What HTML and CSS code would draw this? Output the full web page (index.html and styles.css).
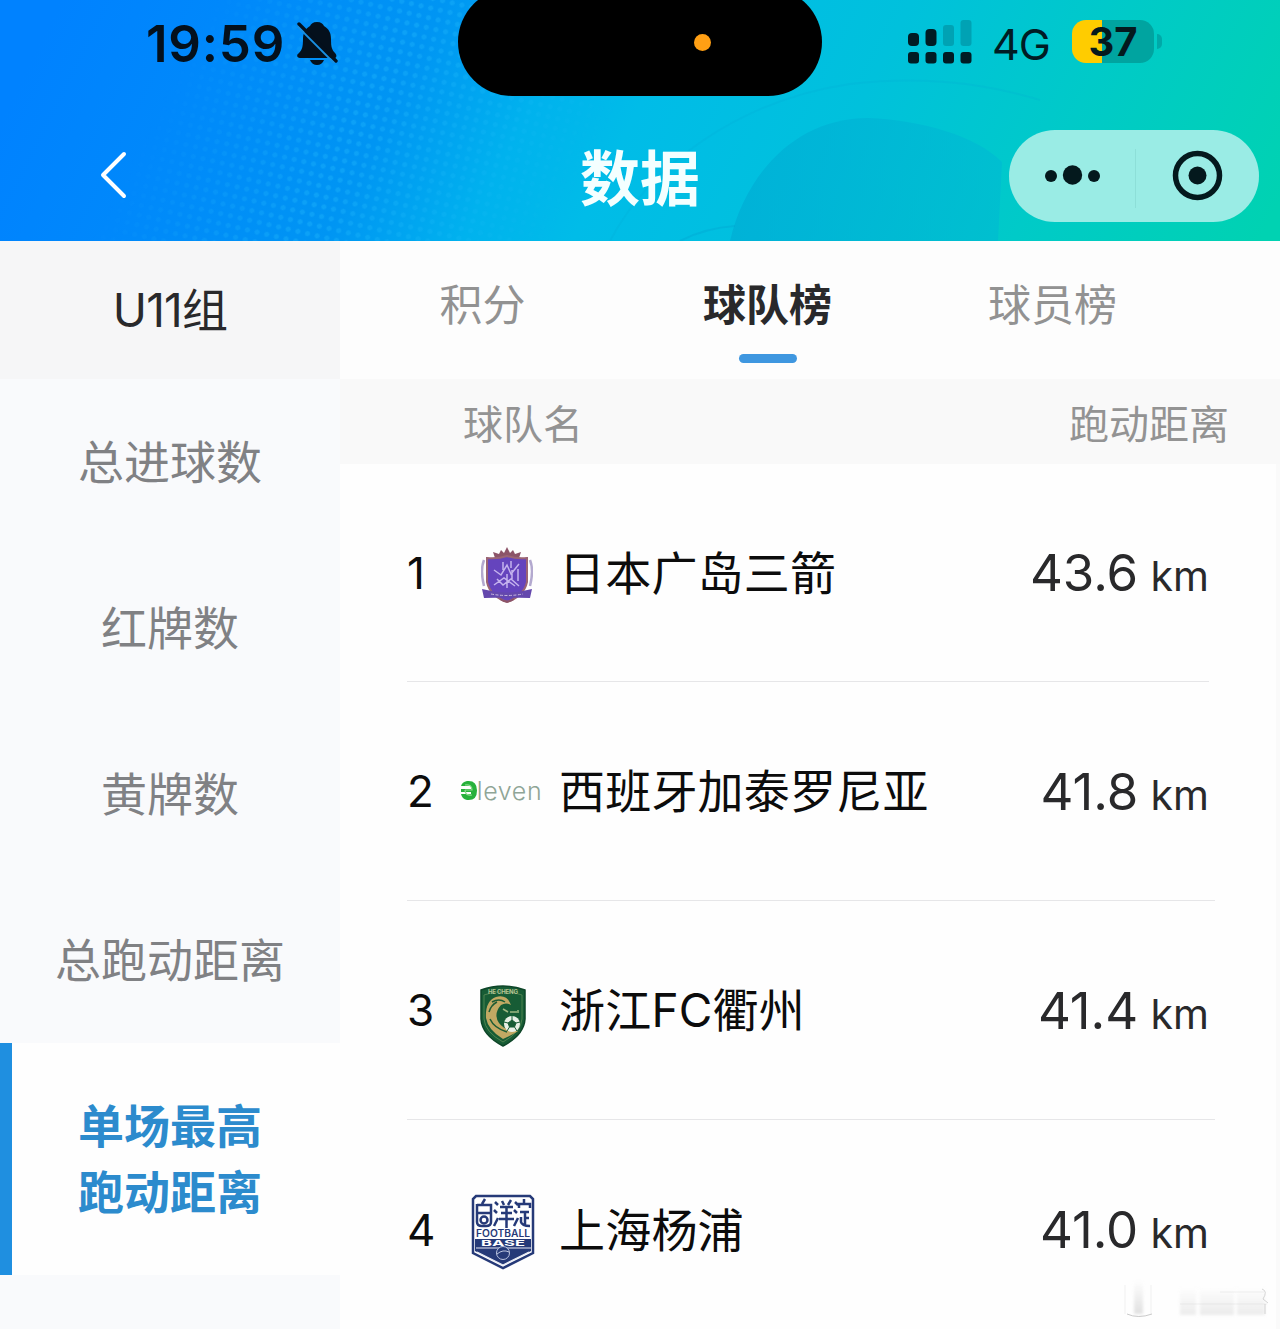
FILE: index.html
```
<!DOCTYPE html>
<html lang="zh-CN">
<head>
  <meta charset="UTF-8">
  <meta name="viewport" content="width=device-width, initial-scale=1">
  <title>数据</title>
  <link rel="stylesheet" href="styles.css">
</head>
<body>
  <div class="header">
    <svg class="header-bg" width="1280" height="241" viewBox="0 0 1280 241">
      <defs>
        <linearGradient id="sky" gradientUnits="userSpaceOnUse" x1="60" y1="0" x2="1160" y2="550">
          <stop offset="0" stop-color="#0082ff"/>
          <stop offset="0.12" stop-color="#0088fb"/>
          <stop offset="0.28" stop-color="#0095f3"/>
          <stop offset="0.38" stop-color="#00b2ee"/>
          <stop offset="0.46" stop-color="#00bce8"/>
          <stop offset="0.62" stop-color="#00c1dc"/>
          <stop offset="0.78" stop-color="#00cac8"/>
          <stop offset="0.96" stop-color="#00d2b2"/>
        </linearGradient>
        <pattern id="dots" width="14" height="14" patternUnits="userSpaceOnUse" patternTransform="rotate(-32)">
          <circle cx="4" cy="4" r="2.6" fill="#2cc6ff"/>
          <circle cx="11" cy="11" r="2.6" fill="#2cc6ff"/>
        </pattern>
        <linearGradient id="fade" gradientUnits="userSpaceOnUse" x1="190" y1="40" x2="560" y2="230">
          <stop offset="0" stop-color="#fff" stop-opacity="0"/>
          <stop offset="0.45" stop-color="#fff" stop-opacity="0.28"/>
          <stop offset="0.75" stop-color="#fff" stop-opacity="0.15"/>
          <stop offset="1" stop-color="#fff" stop-opacity="0"/>
        </linearGradient>
        <mask id="dotmask"><rect width="1280" height="241" fill="url(#fade)"/></mask>
        <linearGradient id="ball" x1="0" y1="0" x2="1" y2="0">
          <stop offset="0" stop-color="#00a9d2" stop-opacity="0.6"/>
          <stop offset="1" stop-color="#00b6d4" stop-opacity="0.5"/>
        </linearGradient>
      </defs>
      <rect width="1280" height="241" fill="url(#sky)"/>
      <rect width="1280" height="241" fill="url(#dots)" mask="url(#dotmask)"/>
      <path d="M730 241C745 175 795 118 868 118C920 120 975 135 1002 162L998 241Z" fill="url(#ball)"/>
      <path d="M610 241C650 165 740 100 850 84C920 76 980 82 1040 100" fill="none" stroke="#00a9d0" stroke-opacity="0.18" stroke-width="2"/>
      <path d="M680 241Q705 228 735 226" fill="none" stroke="#00a0cc" stroke-opacity="0.3" stroke-width="2"/>
    </svg>
    <div class="status">
      <div class="status-left">
        <span class="time">19:59</span>
        <svg class="bell" width="42" height="46" viewBox="0 0 42 46">
          <path d="M20 1c-4 0-6 2-7 4C8 8 6 13 6 18c0 8-1 11-4 14-3 2-2 5 1 5h34c3 0 3-3 1-5-3-3-4-6-4-14 0-6-2-10-7-13-1-2-3-4-7-4z" fill="#04101c"/>
          <path d="M13 39h14c-1 3-4 5-7 5s-6-2-7-5z" fill="#04101c"/>
          <path d="M2 3L39 40" stroke="#04101c" stroke-width="3.400" stroke-linecap="round"/>
          <path d="M0.500 5.500L37 42" stroke="#1a8fe0" stroke-width="1.800"/>
        </svg>
      </div>
      <div class="island"><span class="mic"></span></div>
      <div class="status-right">
        <svg width="64" height="44" viewBox="0 0 64 44">
          <g fill="#001c24">
            <rect x="0" y="13" width="11" height="13" rx="4"/>
            <rect x="17.500" y="9" width="11" height="17" rx="4"/>
            <rect x="0" y="32" width="11" height="11.500" rx="3"/>
            <rect x="17.500" y="32" width="11" height="11.500" rx="3"/>
            <rect x="35" y="32" width="11" height="11.500" rx="3"/>
            <rect x="52.500" y="32" width="11" height="11.500" rx="3"/>
          </g>
          <g fill="#00a2b4">
            <rect x="35" y="5" width="11" height="21" rx="3"/>
            <rect x="52.500" y="0" width="11" height="26" rx="3"/>
          </g>
        </svg>
        <span class="net">4G</span>
        <span class="battery">37</span>
        <span class="battery-cap"></span>
      </div>
    </div>
    <div class="nav">
      <svg class="back" width="30" height="50" viewBox="0 0 30 50">
        <path d="M25 4L4 25L25 46" fill="none" stroke="#fff" stroke-width="4" stroke-linecap="round" stroke-linejoin="round"/>
      </svg>
      <h1>数据</h1>
      <div class="capsule">
        <svg width="250" height="92" viewBox="0 0 250 92">
          <g fill="#04191d">
            <circle cx="42" cy="46" r="6"/>
            <circle cx="63.500" cy="45" r="9.700"/>
            <circle cx="85" cy="46" r="6"/>
            <circle cx="188.500" cy="45.500" r="9"/>
          </g>
          <circle cx="188.500" cy="45.500" r="22" fill="none" stroke="#04191d" stroke-width="5.500"/>
          <path d="M126.500 19V78" stroke="#8ddfd8"/>
        </svg>
      </div>
    </div>
  </div>

  <div class="main">
    <div class="side">
      <div class="group">U11组</div>
      <div class="item">总进球数</div>
      <div class="item">红牌数</div>
      <div class="item">黄牌数</div>
      <div class="item">总跑动距离</div>
      <div class="item active">单场最高<br>跑动距离</div>
    </div>
    <div class="content">
      <div class="tabs">
        <div class="tab">积分</div>
        <div class="tab on">球队榜</div>
        <div class="tab">球员榜</div>
      </div>
      <div class="thead"><span>球队名</span><span>跑动距离</span></div>

      <div class="list">
        <div class="row first">
          <span class="rank">1</span>
          <span class="logo">
            <svg width="52" height="58" viewBox="0 0 52 58">
              <path d="M14 12L12 6L18 8L20 4L23 7L26 1L29 7L32 4L34 8L40 6L38 12Z" fill="#8c5468"/>
              <path d="M6 12Q17 13 26 10Q35 13 46 12V36Q43 50 26 56Q9 50 6 36Z" fill="#6544bd" stroke="#9a6474" stroke-width="2"/>
              <path d="M3 14Q-1 24 3 40M49 14Q53 24 49 40" fill="none" stroke="#b3a9cf" stroke-width="2.500"/>
              <path d="M13 24L20 29L26 19L30 28L38 18M22 16V24M30 15V22M37 23V35M31 24V33M13 39L23 32L34 40M26 28V42M16 33L22 39L30 33L38 40" fill="none" stroke="#c4b2ee" stroke-width="1.500"/>
              <path d="M1 43Q26 50 51 43L49 52Q26 51 3 52Z" fill="#6448ad"/>
              <path d="M10 48Q26 51 42 48" fill="none" stroke="#c8b9df" stroke-dasharray="3 1.500"/>
              <path d="M19 53Q26 58 33 53" fill="none" stroke="#8c5468" stroke-width="2"/>
            </svg>
          </span>
          <span class="name">日本广岛三箭</span>
          <span class="val">43.6 <small>km</small></span>
        </div>
        <div class="row">
          <span class="rank">2</span>
          <span class="logo eleven">
            <svg width="17" height="26" viewBox="0 0 17 26">
              <path d="M7 3Q17 2 17 12.500Q17 23 7 22Q2 21 1 16H11V14H1V11H11V8H1Q2 4 7 3Z" fill="#27b13b"/>
              <path d="M5 7Q12 6 12 12H5M5 12Q5 18 12 17" fill="none" stroke="#8fdc8f" stroke-width="1.200"/>
            </svg>
            <span>leven</span>
          </span>
          <span class="name">西班牙加泰罗尼亚</span>
          <span class="val">41.8 <small>km</small></span>
        </div>
        <div class="row">
          <span class="rank">3</span>
          <span class="logo crest">
            <svg width="48" height="62" viewBox="0 0 48 62">
              <path d="M2 5Q24 -3 46 5V34Q45 50 24 61Q3 50 2 34Z" fill="#175c35" stroke="#0e4528" stroke-width="1.500"/>
              <path d="M5 10Q24 3 43 10V34Q42 47 24 57Q6 47 5 34Z" fill="none" stroke="#4f8250"/>
              <path d="M32 20Q28 9 17 12Q6 16 7 33Q9 45 24 54Q35 49 39 46Q26 46 20 38Q14 29 22 20Q27 17 32 20Z" fill="#c1a963"/>
              <path d="M11 34Q15 43 28 47M13 17Q20 13 26 17M10 27Q12 20 18 17" fill="none" stroke="#1c5c34" stroke-width="1.500"/>
              <circle cx="33" cy="39" r="8" fill="#e8f0e6"/>
              <path d="M33 35L37 38L35.500 42H30.500L29 38ZM33 31V35M41 37L37 38M38 46L35.500 42M28 46L30.500 42M25 37L29 38" fill="#175c35" stroke="#175c35"/>
              <path d="M24 24L29 27M31 27H38M39 25V28" stroke="#9fb882" stroke-width="1.500"/>
              <text class="crest-text" x="9" y="9" textLength="30">HE CHENG</text>
            </svg>
          </span>
          <span class="name">浙江FC衢州</span>
          <span class="val">41.4 <small>km</small></span>
        </div>
        <div class="row last">
          <span class="rank">4</span>
          <span class="logo">
            <svg width="64" height="76" viewBox="0 0 64 76">
              <path d="M5 2H59L62 5V59L32 74L2 59V5Z" fill="#fff" stroke="#263a78" stroke-width="2.500"/>
              <g fill="none" stroke="#263a78" stroke-width="2.500">
                <path d="M14 5L11 10M6 11H20V28Q20 32 15 32H11Q6 32 6 28V10M6 19H20"/>
                <circle cx="13" cy="26" r="3.500"/>
                <path d="M24 8L27 11M23 16L26 19M23 32L27 24M31 7L33 11M40 6L37 11M29 13H42M30 19H41M28 25H43M35.500 12V34"/>
                <path d="M44 8L47 11M43 16L46 19M43 32L47 24M53 5V9M48 14V10H59V14M49 18H58M54 18V31M50 23V28Q51 32 59 32M54 24H58"/>
              </g>
              <text class="football" x="5" y="43" textLength="54" lengthAdjust="spacingAndGlyphs">FOOTBALL</text>
              <path d="M4 45H60V57L32 71L4 57Z" fill="#263a78"/>
              <text class="base" x="10" y="52" textLength="44" lengthAdjust="spacingAndGlyphs">BASE</text>
              <path d="M5 54H60M6 58L32 71L58 58" fill="none" stroke="#e7eaf5" stroke-width="1.200"/>
              <circle cx="32" cy="59" r="6.500" fill="#263a78" stroke="#bcc5df"/>
              <path d="M26 60Q32 55 38 58" fill="none" stroke="#bcc5df"/>
            </svg>
          </span>
          <span class="name">上海杨浦</span>
          <span class="val">41.0 <small>km</small></span>
        </div>
      </div>
    </div>
  </div>

  <!-- faint stamp in the bottom corner -->
  <svg class="stamp" width="150" height="44" viewBox="0 0 150 44">
    <defs>
      <linearGradient id="g" x1="0" y1="0" x2="0" y2="1">
        <stop offset="0" stop-color="#ccc" stop-opacity="0"/>
        <stop offset="1" stop-color="#ccc" stop-opacity="0.600"/>
      </linearGradient>
      <filter id="soft"><feGaussianBlur stdDeviation="1.500"/></filter>
    </defs>
    <g filter="url(#soft)">
      <rect x="14" y="4" width="9" height="33" fill="url(#g)"/>
      <rect x="60" y="10" width="16" height="28" fill="url(#g)" opacity="0.600"/>
      <rect x="80" y="10" width="34" height="28" fill="url(#g)" opacity="0.650"/>
      <rect x="117" y="10" width="28" height="28" fill="url(#g)" opacity="0.600"/>
    </g>
    <path d="M7 37Q18 42 32 37" fill="none" stroke="#bbb" stroke-opacity="0.800"/>
    <path d="M31 8V37M5 8V37" fill="none" stroke="#ccc" stroke-opacity="0.300"/>
    <path d="M100 15H144M60 27H147" fill="none" stroke="#bbb" stroke-opacity="0.200"/>
    <path d="M142 12Q148 14 143 22L148 26M145 27V37" fill="none" stroke="#bbb" stroke-opacity="0.600"/>
  </svg>
</body>
</html>
```
FILE: styles.css
```
body {
  margin: 0;
  height: 1329px;
  position: relative;
  overflow: hidden;
  background: #fefefe;
  color: #0c0c0c;
  font-family: Inter, "Noto Sans CJK SC", sans-serif;
}
svg {
  display: block;
  flex: none;
}
.header {
  display: flow-root;
  position: relative;
  height: 241px;
}
.header-bg {
  position: absolute;
  left: 0;
  top: 0;
}
.status {
  position: relative;
  display: flex;
  height: 96px;
}
.status-left {
  display: flex;
  box-sizing: border-box;
  width: 458px;
  padding: 14px 0 0 146px;
}
.time {
  width: 151px;
  font-size: 51px;
  font-weight: 600;
  line-height: 59px;
  letter-spacing: 0.8px;
  color: #04101c;
}
.bell {
  margin-top: 7px;
}
.island {
  box-sizing: border-box;
  width: 364px;
  height: 108px;
  margin-top: -12px;
  padding: 46px 0 0 236px;
  background: #000;
  border-radius: 54px;
}
.mic {
  display: block;
  width: 17px;
  height: 17px;
  border-radius: 50%;
  background: #ff9f14;
}
.status-right {
  display: flex;
  padding: 20px 0 0 86px;
}
.net {
  width: 80px;
  margin-left: 20px;
  font-size: 43px;
  line-height: 49px;
  letter-spacing: -1px;
  color: #001c24;
}
.battery {
  width: 82px;
  height: 43px;
  border-radius: 14px;
  background: linear-gradient(90deg, #fc0 30px, #00a4a0 30px);
  text-align: center;
  font-size: 40px;
  line-height: 44px;
  font-weight: 700;
  color: #04191d;
}
.battery-cap {
  width: 5px;
  height: 15px;
  margin: 14px 0 0 3px;
  border-radius: 0 5px 5px 0;
  background: #00a9a8;
}
.nav {
  position: relative;
  display: grid;
  grid-template-columns: 340px 600px 340px;
  align-items: center;
  height: 92px;
  padding-top: 34px;
}
.back {
  margin: -3px 0 0 99px;
}
h1 {
  margin: 3px 0 -3px;
  text-align: center;
  font-size: 60px;
  line-height: 92px;
  font-weight: 700;
  color: #f4ffff;
}
.capsule {
  width: 250px;
  height: 92px;
  margin-left: 69px;
  border-radius: 46px;
  background: #9aece5;
}
.main {
  display: flex;
  height: 1088px;
}
.side {
  width: 340px;
  background: #f9fafc;
  text-align: center;
  font-size: 46px;
  line-height: 66px;
  color: #808184;
}
.group {
  height: 138px;
  line-height: 138px;
  background: #f6f6f7;
  color: #29292b;
  letter-spacing: -0.8px;
}
.item {
  padding: 50px 0;
}
.active {
  background: #fefefe;
  border-left: 12px solid #1f8fe0;
  padding-right: 12px;
  font-weight: 700;
  color: #2c8bcd;
}
.content {
  width: 940px;
}
.tabs {
  display: flex;
  height: 138px;
  background: #fdfdfd;
}
.tab {
  width: 285px;
  text-align: center;
  font-size: 43px;
  line-height: 128px;
  color: #929292;
}
.on {
  font-weight: 700;
  color: #29292b;
}
.on::after {
  content: "";
  display: block;
  width: 58px;
  height: 9px;
  margin: -15px auto 0;
  border-radius: 5px;
  background: #3f97e0;
}
.thead {
  display: flex;
  justify-content: space-between;
  height: 84px;
  padding: 1px 51px 0 123px;
  background: #f9f9f9;
  font-size: 40px;
  line-height: 90px;
  color: #939393;
}
.list {
  height: 865px;
  border-right: 4px solid #fafafa;
}
.row {
  display: flex;
  align-items: center;
  box-sizing: border-box;
  height: 219px;
  margin: 0 61px 0 67px;
  border-bottom: 1px solid #e6e6e8;
  font-size: 46px;
}
.first {
  height: 218px;
  margin-right: 67px;
}
.last {
  border-bottom: 0;
}
.rank {
  width: 52px;
  font-size: 44px;
}
.logo {
  display: flex;
  justify-content: center;
  width: 86px;
  margin: 4px 13px 0 1px;
}
.first .logo {
  padding-left: 8px;
  width: 78px;
}
.crest {
  margin-top: 12px;
}
.name {
  flex: 1;
  white-space: nowrap;
  letter-spacing: 0.2px;
  padding-bottom: 6px;
}
.val {
  margin-right: 6px;
  font-size: 51px;
  color: #29292b;
}
.first .val {
  margin-right: 0;
}
.val small {
  margin-left: -2px;
  font-size: 41px;
}
.eleven {
  align-items: center;
  margin-top: 0;
  margin-left: -1px;
  margin-right: 15px;
  font-size: 25px;
  line-height: 30px;
  font-weight: 300;
  letter-spacing: 0.6px;
  color: #8fa596;
}
.crest-text {
  font-size: 6px;
  font-weight: 700;
  fill: #b3c493;
}
.football {
  font-size: 10px;
  font-weight: 600;
  fill: #263a78;
}
.base {
  font-size: 8px;
  font-weight: 700;
  fill: #fff;
}
.stamp {
  position: absolute;
  right: 10px;
  bottom: 8px;
}
```
